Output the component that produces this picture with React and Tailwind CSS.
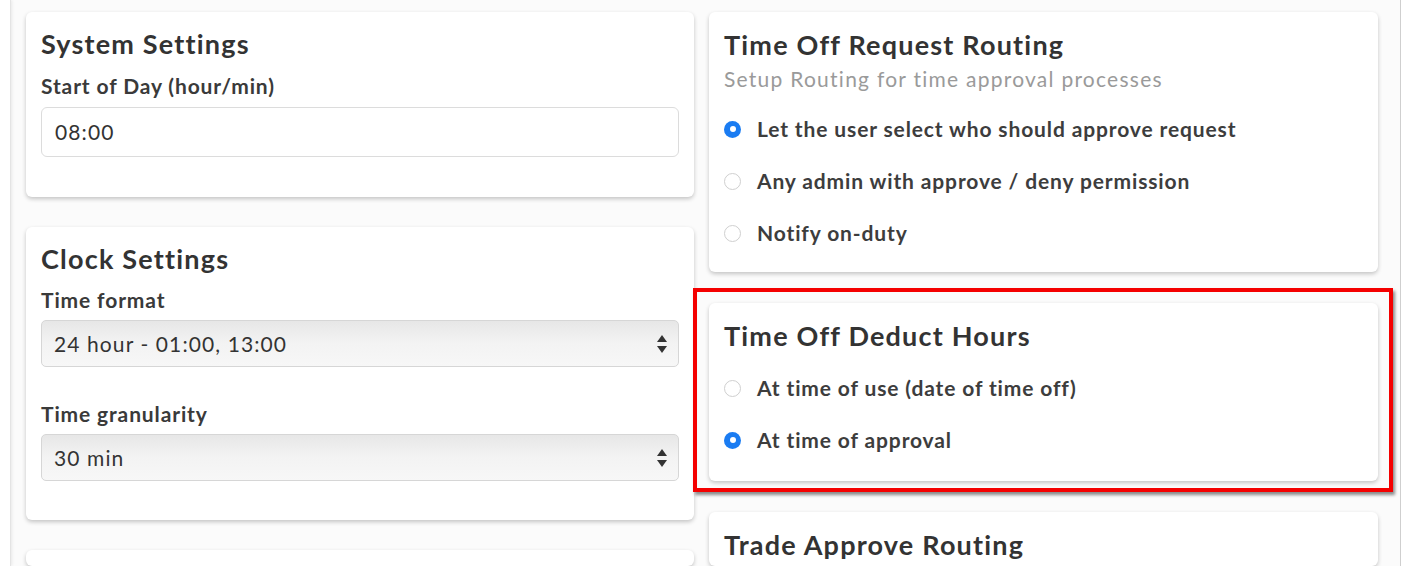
import { useState } from "react";

function Card({ children, className = "" }) {
  return (
    <div
      className={
        "bg-white rounded-md shadow-[0_2px_4px_rgba(0,0,0,0.22)] px-[15px] " +
        className
      }
    >
      {children}
    </div>
  );
}

function Title({ children }) {
  return (
    <h2 className="text-[27px] leading-[32px] tracking-[1.2px] font-bold text-[#333]">
      {children}
    </h2>
  );
}

function Label({ children }) {
  return (
    <div className="text-[21px] leading-[28px] tracking-[0.87px] font-bold text-[#3a3a3a]">
      {children}
    </div>
  );
}

function SelectBox({ value }) {
  return (
    <div className="h-[47px] rounded-[5px] border border-[#d6d6d6] bg-gradient-to-b from-[#e7e7e7] via-[#f3f3f3] to-[#f7f7f7] flex items-center justify-between pl-[12px] pr-[10px]">
      <span className="text-[21px] tracking-[1.1px] text-[#333]">{value}</span>
      <svg width="12" height="22" viewBox="0 0 12 22">
        <path d="M6 2 L11 9 L1 9 Z" fill="#333" />
        <path d="M1 13 L11 13 L6 20 Z" fill="#333" />
      </svg>
    </div>
  );
}

function Radio({ checked, label, onClick }) {
  return (
    <button
      onClick={onClick}
      className="flex items-center gap-[16px] h-[28px] text-left"
    >
      {checked ? (
        <span className="w-[17px] h-[17px] rounded-full bg-[#1a7cf2] flex items-center justify-center">
          <span className="w-[6px] h-[6px] rounded-full bg-white" />
        </span>
      ) : (
        <span className="w-[17px] h-[17px] rounded-full border border-[#cfcfcf] bg-white" />
      )}
      <span className="text-[21px] leading-[28px] tracking-[0.87px] font-bold text-[#3d3d3d]">
        {label}
      </span>
    </button>
  );
}

export default function App() {
  const [routing, setRouting] = useState(0);
  const [deduct, setDeduct] = useState(1);

  const routingOptions = [
    "Let the user select who should approve request",
    "Any admin with approve / deny permission",
    "Notify on-duty",
  ];

  return (
    <div
      className="h-[566px] w-[1402px] overflow-hidden bg-[#fbfbfb] flex"
      style={{ fontFamily: "Lato, 'Open Sans', sans-serif" }}
    >
      {/* left edge panel */}
      <div className="w-[11px] shrink-0 bg-white border-r border-[#e4e4e4] shadow-[1px_0_3px_rgba(0,0,0,0.08)]" />

      <div className="flex gap-[15px] pl-[15px] pt-[12px]">
        {/* LEFT COLUMN */}
        <div className="w-[668px] flex flex-col gap-[30px]">
          <Card className="pt-[16px] pb-[40px]">
            <Title>System Settings</Title>
            <div className="mt-[12px]">
              <Label>Start of Day (hour/min)</Label>
            </div>
            <div className="mt-[7px] h-[50px] rounded-[6px] border border-[#dcdcdc] flex items-center px-[13px] text-[21px] tracking-[1.1px] text-[#333]">
              08:00
            </div>
          </Card>

          <Card className="pt-[16px] pb-[39px]">
            <Title>Clock Settings</Title>
            <div className="mt-[11px]">
              <Label>Time format</Label>
            </div>
            <div className="mt-[6px]">
              <SelectBox value="24 hour - 01:00, 13:00" />
            </div>
            <div className="mt-[33px]">
              <Label>Time granularity</Label>
            </div>
            <div className="mt-[6px]">
              <SelectBox value="30 min" />
            </div>
          </Card>

          <Card className="h-[80px]" />
        </div>

        {/* RIGHT COLUMN */}
        <div className="w-[669px] flex flex-col gap-[31px]">
          <Card className="pt-[17px] pb-[25px]">
            <Title>Time Off Request Routing</Title>
            <div className="mt-[4px] text-[21px] leading-[28px] tracking-[1.25px] text-[#9a9a9a]">
              Setup Routing for time approval processes
            </div>
            <div className="mt-[22px] flex flex-col gap-[24px]">
              {routingOptions.map((o, i) => (
                <Radio
                  key={o}
                  label={o}
                  checked={routing === i}
                  onClick={() => setRouting(i)}
                />
              ))}
            </div>
          </Card>

          <div className="relative">
            <Card className="pt-[17px] pb-[27px]">
              <Title>Time Off Deduct Hours</Title>
              <div className="mt-[22px] flex flex-col gap-[24px]">
                <Radio
                  label="At time of use (date of time off)"
                  checked={deduct === 0}
                  onClick={() => setDeduct(0)}
                />
                <Radio
                  label="At time of approval"
                  checked={deduct === 1}
                  onClick={() => setDeduct(1)}
                />
              </div>
            </Card>
            {/* annotation highlight */}
            <div className="absolute left-[-16px] right-[-15px] top-[-15px] bottom-[-11px] border-[4px] border-[#f40000] shadow-[2px_3px_3px_rgba(0,0,0,0.45)] pointer-events-none" />
          </div>

          <Card className="pt-[17px] h-[80px]">
            <Title>Trade Approve Routing</Title>
          </Card>
        </div>
      </div>

      <div className="ml-auto w-[2px] shrink-0 bg-white border-l border-[#cfcfcf]" />
    </div>
  );
}
